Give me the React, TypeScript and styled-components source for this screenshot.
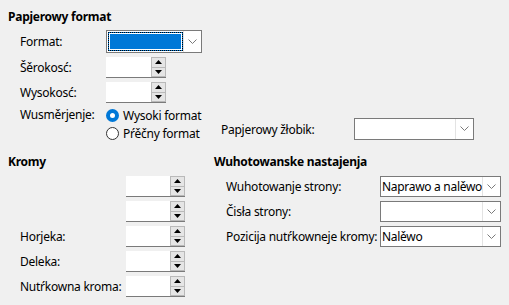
import styled, {createGlobalStyle} from 'styled-components';

const GlobalStyle = createGlobalStyle`
  html, body {
    margin: 0;
    padding: 0;
    background: #f0f0f0;
  }
  body {
    font-family: "Noto Sans", "Liberation Sans", sans-serif;
    font-size: 12px;
    letter-spacing: -0.25px;
    color: #000;
  }
`;

const Page = styled.div`
  width: 509px;
  height: 305px;
  box-sizing: border-box;
  padding: 9px 8px 0 8px;
  background: #f0f0f0;
  display: flex;
  flex-direction: column;
`;

const Heading = styled.div`
  font-weight: 700;
  height: 16px;
  line-height: 16px;
  white-space: nowrap;
`;

const Section = styled.div<{gap?: number}>`
  display: flex;
  flex-direction: column;
  gap: 4px;
  padding-left: 12px;
  margin-top: ${p => p.gap ?? 5}px;
`;

const Row = styled.div<{h?: number}>`
  display: flex;
  align-items: center;
  height: ${p => p.h ?? 21}px;
`;

const Label = styled.div<{w: number}>`
  width: ${p => p.w}px;
  flex: none;
  white-space: nowrap;
`;

const Bottom = styled.div`
  display: flex;
  margin-top: 13px;
`;

const Column = styled.div<{w?: number}>`
  width: ${p => (p.w ? `${p.w}px` : 'auto')};
  flex: none;
  display: flex;
  flex-direction: column;
`;

/* combo box */
const Combo = styled.div<{w: number; h?: number}>`
  width: ${p => p.w}px;
  height: ${p => p.h ?? 21}px;
  box-sizing: border-box;
  border: 1px solid #7a7a7a;
  background: #fff;
  display: flex;
  flex: none;
`;

const ComboText = styled.div`
  flex: 1;
  padding-left: 1px;
  line-height: 19px;
  letter-spacing: -0.3px;
  white-space: nowrap;
  overflow: hidden;
`;

const FocusField = styled.div`
  flex: 1;
  box-sizing: border-box;
  margin: 1px 0 1px 1px;
  border: 1px dotted #000;
  background: #0078d7;
  outline: 1px solid #fff;
  outline-offset: -2px;
`;

const DropButton = styled.div`
  width: 17px;
  flex: none;
  border-left: 1px solid #e3e3e3;
  display: flex;
  align-items: center;
  justify-content: center;
`;

const Chevron = () => (
    <svg width="9" height="6" viewBox="0 0 9 6">
        <path d="M0.5 0.5 L4.5 4.5 L8.5 0.5" fill="none" stroke="#7a7a7a" strokeWidth="1"/>
    </svg>
);

/* spin box */
const Spin = styled.div<{w: number}>`
  width: ${p => p.w}px;
  height: 21px;
  flex: none;
  box-sizing: border-box;
  display: flex;
  border-bottom: 1px solid #7a7a7a;
`;

const SpinInput = styled.div`
  flex: 1;
  background: #fff;
`;

const SpinButtons = styled.div`
  width: 15px;
  flex: none;
  display: flex;
  flex-direction: column;
  background: #f0f0f0;
`;

const SpinBtn = styled.div`
  flex: 1;
  box-sizing: border-box;
  border: 1px solid #b9b9b9;
  background: #e5e5e5;
  display: flex;
  align-items: center;
  justify-content: center;
  & + & {
    border-top: none;
  }
`;

const Arrow = ({down}: {down?: boolean}) => (
    <svg width="7" height="4" viewBox="0 0 7 4">
        <path d={down ? 'M0 0 L7 0 L3.5 4 Z' : 'M0 4 L7 4 L3.5 0 Z'} fill="#000"/>
    </svg>
);

const SpinBox = ({w}: {w: number}) => (
    <Spin w={w}>
        <SpinInput/>
        <SpinButtons>
            <SpinBtn><Arrow/></SpinBtn>
            <SpinBtn><Arrow down/></SpinBtn>
        </SpinButtons>
    </Spin>
);

/* radios */
const RadioGroup = styled.div`
  width: 115px;
  flex: none;
  display: flex;
  flex-direction: column;
  gap: 2px;
`;

const RadioRow = styled.div`
  display: flex;
  align-items: center;
  gap: 4px;
  height: 16px;
  white-space: nowrap;
`;

const RadioDot = styled.span<{checked?: boolean}>`
  width: 13px;
  height: 13px;
  box-sizing: border-box;
  border-radius: 50%;
  flex: none;
  background: #fff;
  border: ${p => (p.checked ? '4px solid #0078d7' : '1px solid #333')};
`;

const OrientRow = styled.div`
  display: flex;
  align-items: flex-start;
`;

const OrientLabel = styled.div`
  width: 86px;
  flex: none;
  line-height: 16px;
`;

const Tray = styled.div`
  display: flex;
  align-items: center;
  margin-top: 11px;
`;

const App = () => {
    return <>
        <GlobalStyle/>
        <Page>
            <Heading>Papjerowy format</Heading>
            <Section>
                <Row h={23}>
                    <Label w={86}>Format:</Label>
                    <Combo w={96} h={23}>
                        <FocusField/>
                        <DropButton><Chevron/></DropButton>
                    </Combo>
                </Row>
                <Row>
                    <Label w={86}>Šěrokosć:</Label>
                    <SpinBox w={60}/>
                </Row>
                <Row>
                    <Label w={86}>Wysokosć:</Label>
                    <SpinBox w={60}/>
                </Row>
                <OrientRow>
                    <OrientLabel>Wusměrjenje:</OrientLabel>
                    <RadioGroup>
                        <RadioRow><RadioDot checked/>Wysoki format</RadioRow>
                        <RadioRow><RadioDot/>Pŕěčny format</RadioRow>
                    </RadioGroup>
                    <Tray>
                        <Label w={133}>Papjerowy žłobik:</Label>
                        <Combo w={120} h={22}>
                            <ComboText/>
                            <DropButton><Chevron/></DropButton>
                        </Combo>
                    </Tray>
                </OrientRow>
            </Section>
            <Bottom>
                <Column w={206}>
                    <Heading>Kromy</Heading>
                    <Section gap={6}>
                        <Row><Label w={106}/><SpinBox w={59}/></Row>
                        <Row><Label w={106}/><SpinBox w={59}/></Row>
                        <Row><Label w={106}>Horjeka:</Label><SpinBox w={59}/></Row>
                        <Row><Label w={106}>Deleka:</Label><SpinBox w={59}/></Row>
                        <Row><Label w={106}>Nutŕkowna kroma:</Label><SpinBox w={59}/></Row>
                    </Section>
                </Column>
                <Column>
                    <Heading>Wuhotowanske nastajenja</Heading>
                    <Section gap={6}>
                        <Row>
                            <Label w={154}>Wuhotowanje strony:</Label>
                            <Combo w={121}>
                                <ComboText>Naprawo a nalěwo</ComboText>
                                <DropButton><Chevron/></DropButton>
                            </Combo>
                        </Row>
                        <Row>
                            <Label w={154}>Čisła strony:</Label>
                            <Combo w={121}>
                                <ComboText/>
                                <DropButton><Chevron/></DropButton>
                            </Combo>
                        </Row>
                        <Row>
                            <Label w={154}>Pozicija nutŕkowneje kromy:</Label>
                            <Combo w={121}>
                                <ComboText>Nalěwo</ComboText>
                                <DropButton><Chevron/></DropButton>
                            </Combo>
                        </Row>
                    </Section>
                </Column>
            </Bottom>
        </Page>
    </>;
};

export default App;
